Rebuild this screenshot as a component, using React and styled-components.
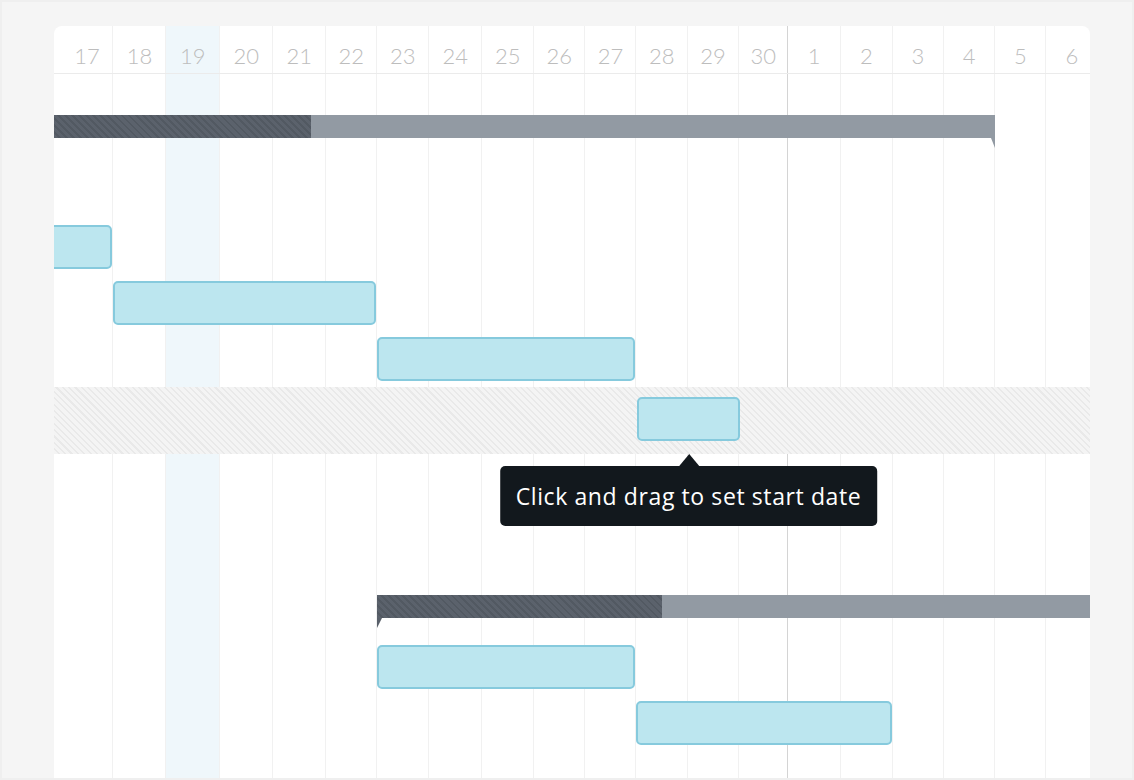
import React from 'react';
import styled, { createGlobalStyle } from 'styled-components';

const days = [
  { label: '17', w: 52 },
  { label: '18', w: 53 },
  { label: '19', w: 53.5, highlight: true },
  { label: '20', w: 53.5 },
  { label: '21', w: 52.5 },
  { label: '22', w: 51.5 },
  { label: '23', w: 51.5 },
  { label: '24', w: 53.5 },
  { label: '25', w: 51.5 },
  { label: '26', w: 51.5 },
  { label: '27', w: 51 },
  { label: '28', w: 51.5 },
  { label: '29', w: 51 },
  { label: '30', w: 49.5, today: true },
  { label: '1', w: 52.5 },
  { label: '2', w: 52 },
  { label: '3', w: 51 },
  { label: '4', w: 51.5 },
  { label: '5', w: 51 },
  { label: '6', w: 52 },
];

const template = days.map((d) => `${d.w}px`).join(' ');

const GlobalStyle = createGlobalStyle`
  html, body {
    margin: 0;
    height: 100%;
    overflow: hidden;
    background: #f5f5f5;
    font-family: "Open Sans", Lato, sans-serif;
  }
`;

const Frame = styled.div`
  box-sizing: border-box;
  width: 100vw;
  height: 100vh;
  border: 2px solid #efefef;
  padding: 24px 0 0 52px;
  overflow: hidden;
`;

const Card = styled.div`
  width: 1036px;
  min-height: 800px;
  background: #fff;
  border-radius: 8px 8px 0 0;
  overflow: hidden;
  display: grid;
  grid-template-columns: minmax(0, 1fr);

  & > * {
    grid-area: 1 / 1;
    min-width: 0;
  }
`;

const Columns = styled.div`
  display: grid;
  grid-template-columns: ${template};
  margin-left: 7px;
`;

const Column = styled.div`
  box-sizing: border-box;
  border-right: 1px solid ${(p) => (p.$today ? '#d4d4d4' : '#f1f1f1')};
  background: ${(p) => (p.$highlight ? '#eff7fb' : 'transparent')};
`;

const Content = styled.div`
  display: flex;
  flex-direction: column;
`;

const Header = styled.div`
  height: 47px;
  border-bottom: 1px solid #ebebeb;
`;

const HeaderRow = styled.div`
  display: grid;
  grid-template-columns: ${template};
  margin-left: 7px;
  height: 100%;
`;

const DayLabel = styled.div`
  display: flex;
  align-items: center;
  justify-content: center;
  padding-top: 11px;
  font-family: Lato, "Open Sans", sans-serif;
  font-weight: 300;
  font-size: 22px;
  color: #bdbdbd;
`;

const Row = styled.div`
  height: ${(p) => p.$h}px;
  background: ${(p) =>
    p.$band
      ? 'repeating-linear-gradient(45deg, #f4f4f4 0 3px, #e9e9e9 3px 4.5px)'
      : 'transparent'};
`;

const RowGrid = styled.div`
  display: grid;
  grid-template-columns: ${template};
  align-items: start;
  margin-left: 7px;
  padding-top: ${(p) => p.$top || 6}px;
`;

const TaskBar = styled.div`
  grid-column: ${(p) => p.$from} / ${(p) => p.$to};
  margin-left: ${(p) => p.$ml || 0}px;
  margin-right: ${(p) => (p.$mr === undefined ? 1 : p.$mr)}px;
  position: relative;
  box-sizing: border-box;
  height: 44px;
  background: #bce6ef;
  border: 2px solid #86cadd;
  border-radius: 5px;
`;

const SummaryBar = styled.div`
  grid-column: ${(p) => p.$from} / ${(p) => p.$to};
  margin-left: ${(p) => p.$ml || 0}px;
  position: relative;
  display: flex;
  height: 23px;
  background: #929aa3;

  &::after {
    content: '';
    position: absolute;
    top: 100%;
    ${(p) => (p.$flag === 'end' ? 'right: 0;' : 'left: 0;')}
    width: 0;
    height: 0;
    border-top: 10px solid ${(p) => (p.$flag === 'end' ? '#929aa3' : '#59606a')};
    ${(p) =>
      p.$flag === 'end'
        ? 'border-left: 4px solid transparent;'
        : 'border-right: 5px solid transparent;'}
  }
`;

const Progress = styled.div`
  width: ${(p) => p.$value}%;
  background: repeating-linear-gradient(45deg, #5b626c 0 3px, #525962 3px 5px);
`;

const Tooltip = styled.div`
  position: absolute;
  top: calc(100% + 27px);
  left: 50%;
  transform: translateX(-50%);
  z-index: 2;
  box-sizing: border-box;
  height: 60px;
  padding: 0 16px;
  border-radius: 5px;
  background: #12181d;
  color: #fff;
  font-size: 23px;
  letter-spacing: 0.6px;
  line-height: 60px;
  white-space: nowrap;

  &::before {
    content: '';
    position: absolute;
    bottom: 100%;
    left: 50%;
    margin-left: -9px;
    border-left: 10px solid transparent;
    border-right: 10px solid transparent;
    border-bottom: 12px solid #12181d;
  }
`;

export default function App() {
  return (
    <>
      <GlobalStyle />
      <Frame>
        <Card>
          <Columns>
            {days.map((d) => (
              <Column key={d.label} $highlight={d.highlight} $today={d.today} />
            ))}
          </Columns>
          <Content>
            <Header>
              <HeaderRow>
                {days.map((d) => (
                  <DayLabel key={d.label}>{d.label}</DayLabel>
                ))}
              </HeaderRow>
            </Header>

            <Row $h={145}>
              <RowGrid $top={41}>
                <SummaryBar $from={1} $to={19} $ml={-7} $flag="end">
                  <Progress $value={27.3} />
                </SummaryBar>
              </RowGrid>
            </Row>
            <Row $h={56}>
              <RowGrid>
                <TaskBar $from={1} $to={2} $ml={-30} />
              </RowGrid>
            </Row>
            <Row $h={56}>
              <RowGrid>
                <TaskBar $from={2} $to={7} />
              </RowGrid>
            </Row>
            <Row $h={56}>
              <RowGrid>
                <TaskBar $from={7} $to={12} />
              </RowGrid>
            </Row>
            <Row $h={67} $band>
              <RowGrid $top={10}>
                <TaskBar $from={12} $to={14} $ml={1} $mr={-1.5}>
                  <Tooltip>Click and drag to set start date</Tooltip>
                </TaskBar>
              </RowGrid>
            </Row>
            <Row $h={129} />
            <Row $h={56}>
              <RowGrid $top={12}>
                <SummaryBar $from={7} $to={21} $flag="start">
                  <Progress $value={39.5} />
                </SummaryBar>
              </RowGrid>
            </Row>
            <Row $h={56}>
              <RowGrid>
                <TaskBar $from={7} $to={12} />
              </RowGrid>
            </Row>
            <Row $h={56}>
              <RowGrid>
                <TaskBar $from={12} $to={17} />
              </RowGrid>
            </Row>
          </Content>
        </Card>
      </Frame>
    </>
  );
}
